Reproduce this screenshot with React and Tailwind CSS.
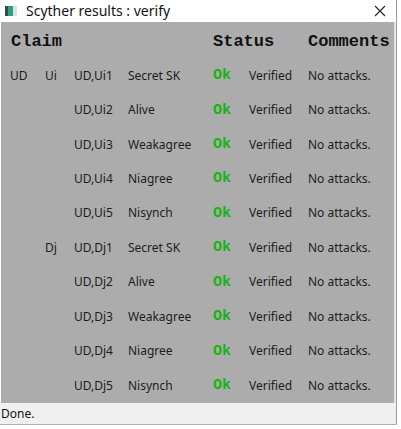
import React from "react";

const rows = [
  ["UD", "Ui", "UD,Ui1", "Secret SK"],
  ["", "", "UD,Ui2", "Alive"],
  ["", "", "UD,Ui3", "Weakagree"],
  ["", "", "UD,Ui4", "Niagree"],
  ["", "", "UD,Ui5", "Nisynch"],
  ["", "Dj", "UD,Dj1", "Secret SK"],
  ["", "", "UD,Dj2", "Alive"],
  ["", "", "UD,Dj3", "Weakagree"],
  ["", "", "UD,Dj4", "Niagree"],
  ["", "", "UD,Dj5", "Nisynch"],
];

export default function App() {
  return (
    <div className="w-[401px] h-[429px] bg-white overflow-hidden relative" style={{ fontFamily: '"Noto Sans", "Open Sans", sans-serif' }}>
      <div className="w-[397px] h-[424px] flex flex-col border-r border-[#9a9a9a]">
        {/* title bar */}
        <div className="h-[22px] flex items-center bg-white shrink-0">
          <div className="ml-[5px] w-[12px] h-[10px] flex">
            <div className="w-[3px] h-full bg-[#3a4a4a]" />
            <div className="w-[5px] h-full bg-[#2e9f86]" />
            <div className="w-[4px] h-full bg-[#cfe8e2]" />
          </div>
          <span className="ml-[9px] text-[14px] text-[#111] leading-none" style={{ fontFamily: '"Noto Sans", sans-serif' }}>Scyther results : verify</span>
          <svg className="ml-auto mr-[10px]" width="12" height="12" viewBox="0 0 12 12">
            <path d="M1 1 L11 11 M11 1 L1 11" stroke="#222" strokeWidth="1.1" />
          </svg>
        </div>
        {/* body */}
        <div className="flex flex-1 min-h-0 pl-[1px]">
          <div className="flex-1 bg-[#acacac] pt-[2px] text-[#1c1c1c]">
            <div className="h-[34.44px] flex items-center font-bold text-[17px] leading-none text-[#111]" style={{ fontFamily: '"Liberation Mono", "Courier New", monospace' }}>
              <div className="w-[212px] pl-[10px]">Claim</div>
              <div className="w-[95px]">Status</div>
              <div>Comments</div>
            </div>
            {rows.map((r, i) => (
              <div key={i} className="h-[34.44px] flex items-center text-[12px] leading-none">
                <div className="w-[44px] pl-[9px]">{r[0]}</div>
                <div className="w-[29px]">{r[1]}</div>
                <div className="w-[54px]">{r[2]}</div>
                <div className="w-[85px]">{r[3]}</div>
                <div className="w-[36px] font-bold text-[15px] text-[#14b414]" style={{ fontFamily: '"Liberation Mono", "Courier New", monospace' }}>Ok</div>
                <div className="w-[59px]">Verified</div>
                <div>No attacks.</div>
              </div>
            ))}
          </div>
          <div className="w-[2px] bg-[#e6e6e6]" />
        </div>
        {/* status bar */}
        <div className="h-[21px] bg-[#f0f0f0] flex items-center pl-[1px] text-[12px] text-[#111] shrink-0">
          Done.
        </div>
      </div>
      <div className="h-px w-[397px] bg-[#b0b0b0]" />
    </div>
  );
}
